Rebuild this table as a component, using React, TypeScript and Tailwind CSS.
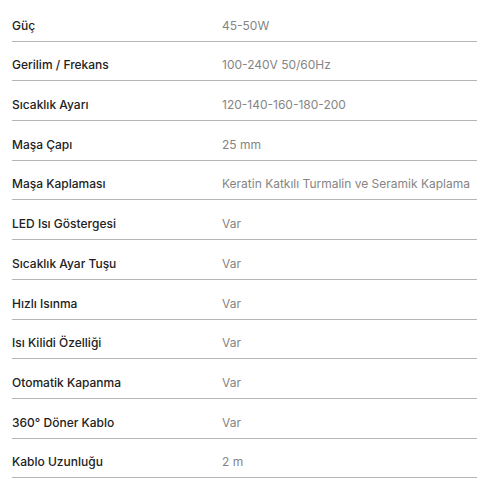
const SPECS: [string, string][] = [
  ["Güç", "45-50W"],
  ["Gerilim / Frekans", "100-240V 50/60Hz"],
  ["Sıcaklık Ayarı", "120-140-160-180-200"],
  ["Maşa Çapı", "25 mm"],
  ["Maşa Kaplaması", "Keratin Katkılı Turmalin ve Seramik Kaplama"],
  ["LED Isı Göstergesi", "Var"],
  ["Sıcaklık Ayar Tuşu", "Var"],
  ["Hızlı Isınma", "Var"],
  ["Isı Kilidi Özelliği", "Var"],
  ["Otomatik Kapanma", "Var"],
  ["360° Döner Kablo", "Var"],
  ["Kablo Uzunluğu", "2 m"],
];

export default function App() {
  return (
    <div className="bg-white pl-3 pt-[2px] font-['Inter',sans-serif] text-[12px] leading-[15px]">
      {SPECS.map(([label, value]) => (
        <div
          key={label}
          className="flex items-end pb-[8px] border-b border-[#b5b5b5] h-[39.7px]"
        >
          <div className="w-[210px] shrink-0 font-medium text-[#222]">{label}</div>
          <div className="text-[#858585] whitespace-nowrap">{value}</div>
        </div>
      ))}
    </div>
  );
}
